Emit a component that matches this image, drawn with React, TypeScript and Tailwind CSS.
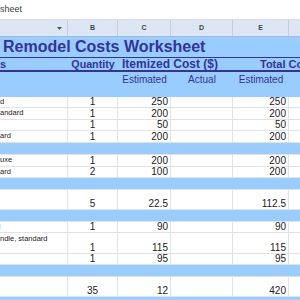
import React from "react";

type Row =
  | { kind: "band" }
  | {
      kind: "data";
      h: string;
      a?: string;
      aBlue?: boolean;
      aTop?: boolean;
      b: string;
      c: string;
      e: string;
    };

const rows: Row[] = [
  { kind: "data", h: "h-[11px]", a: "d", b: "1", c: "250", e: "250" },
  { kind: "data", h: "h-[12px]", a: "andard", b: "1", c: "200", e: "200" },
  { kind: "data", h: "h-[11px]", a: "", b: "1", c: "50", e: "50" },
  { kind: "data", h: "h-[12px]", a: "ard", b: "1", c: "200", e: "200" },
  { kind: "band" },
  { kind: "data", h: "h-[12px]", a: "uxe", b: "1", c: "200", e: "200" },
  { kind: "data", h: "h-[11px]", a: "ard", b: "2", c: "100", e: "200" },
  { kind: "band" },
  { kind: "data", h: "h-[20px]", a: "", b: "5", c: "22.5", e: "112.5" },
  { kind: "band" },
  { kind: "data", h: "h-[11px]", a: "l", aBlue: true, b: "1", c: "90", e: "90" },
  { kind: "data", h: "h-[21px]", a: "ndle, standard", aTop: true, b: "1", c: "115", e: "115" },
  { kind: "data", h: "h-[11px]", a: "", b: "1", c: "95", e: "95" },
  { kind: "band" },
  { kind: "data", h: "h-[20px]", a: "", b: "35", c: "12", e: "420" },
  { kind: "band" },
];

const grid = "border-r border-[#e2e2e2] shrink-0";

export default function App() {
  return (
    <div className="w-[300px] h-[300px] overflow-hidden bg-white font-['Liberation_Sans',Arial,sans-serif]">
      {/* top bar */}
      <div className="h-[20px] border-b border-[#dadce0] flex items-center text-[9px] text-[#3c4043] whitespace-nowrap">
        <span className="ml-[0px]">sheet</span>
      </div>

      {/* column letters */}
      <div className="h-[17px] flex bg-[#dde6f4] border-b border-[#a7b8d6] text-[7px] font-bold text-[#444]">
        <div className="w-[68px] shrink-0 border-r border-[#c5ccd8] flex items-center justify-end pr-[5px]">
          <svg width="5" height="3" viewBox="0 0 5 3">
            <path d="M0 0 L5 0 L2.5 3 Z" fill="#555" />
          </svg>
        </div>
        <div className="w-[50px] shrink-0 border-r border-[#c5ccd8] flex items-center justify-center">B</div>
        <div className="w-[53px] shrink-0 border-r border-[#c5ccd8] flex items-center justify-center">C</div>
        <div className="w-[62px] shrink-0 border-r border-[#c5ccd8] flex items-center justify-center">D</div>
        <div className="w-[56px] shrink-0 border-r border-[#c5ccd8] flex items-center justify-center">E</div>
        <div className="flex-1" />
      </div>

      {/* title */}
      <div className="h-[20px] bg-[#99ccff] flex items-center pl-[3px] text-[16px] font-bold text-[#333399] whitespace-nowrap">
        Remodel Costs Worksheet
      </div>

      {/* column headings */}
      <div className="h-[15px] bg-[#99ccff] border-t border-b-2 border-[#333399] flex items-center font-bold text-[#333399] whitespace-nowrap">
        <div className="w-[68px] shrink-0 text-[11px]">s</div>
        <div className="w-[50px] shrink-0 flex justify-center text-[10.7px]">Quantity</div>
        <div className="w-[115px] shrink-0 pl-[4px] text-[12px]">Itemized Cost ($)</div>
        <div className="w-[56px] shrink-0 pl-[27px] text-[11px]">Total Cost ($)</div>
      </div>

      {/* estimated / actual */}
      <div className="h-[25px] bg-[#99ccff] flex items-start pt-[2px] text-[10px] leading-[12px] text-[#333399] whitespace-nowrap">
        <div className="w-[68px] shrink-0" />
        <div className="w-[50px] shrink-0" />
        <div className="w-[53px] shrink-0 flex justify-center">Estimated</div>
        <div className="w-[62px] shrink-0 flex justify-center">Actual</div>
        <div className="w-[56px] shrink-0 flex justify-center">Estimated</div>
      </div>

      {/* data */}
      {rows.map((r, i) =>
        r.kind === "band" ? (
          <div key={i} className="h-[12px] bg-[#99ccff] border-b border-[#e2e2e2]" />
        ) : (
          <div
            key={i}
            className={`${r.h} flex border-b border-[#e2e2e2] text-[10px] leading-[11px] text-[#222]`}
          >
            <div
              className={`w-[68px] ${grid} flex ${
                r.aTop ? "items-start pt-[1px]" : "items-center pb-[2px]"
              } text-[7.5px] leading-[9px] whitespace-nowrap overflow-hidden ${
                r.aBlue ? "text-[#9cc3f5]" : "text-[#222]"
              }`}
            >
              <span className={r.aBlue ? "ml-[-1px]" : ""}>{r.a}</span>
            </div>
            <div className={`w-[50px] ${grid} flex items-end justify-center`}>{r.b}</div>
            <div className={`w-[53px] ${grid} flex items-end justify-end pr-[2px]`}>{r.c}</div>
            <div className={`w-[62px] ${grid}`} />
            <div className={`w-[56px] ${grid} flex items-end justify-end pr-[2px]`}>{r.e}</div>
            <div className="flex-1" />
          </div>
        )
      )}
    </div>
  );
}
